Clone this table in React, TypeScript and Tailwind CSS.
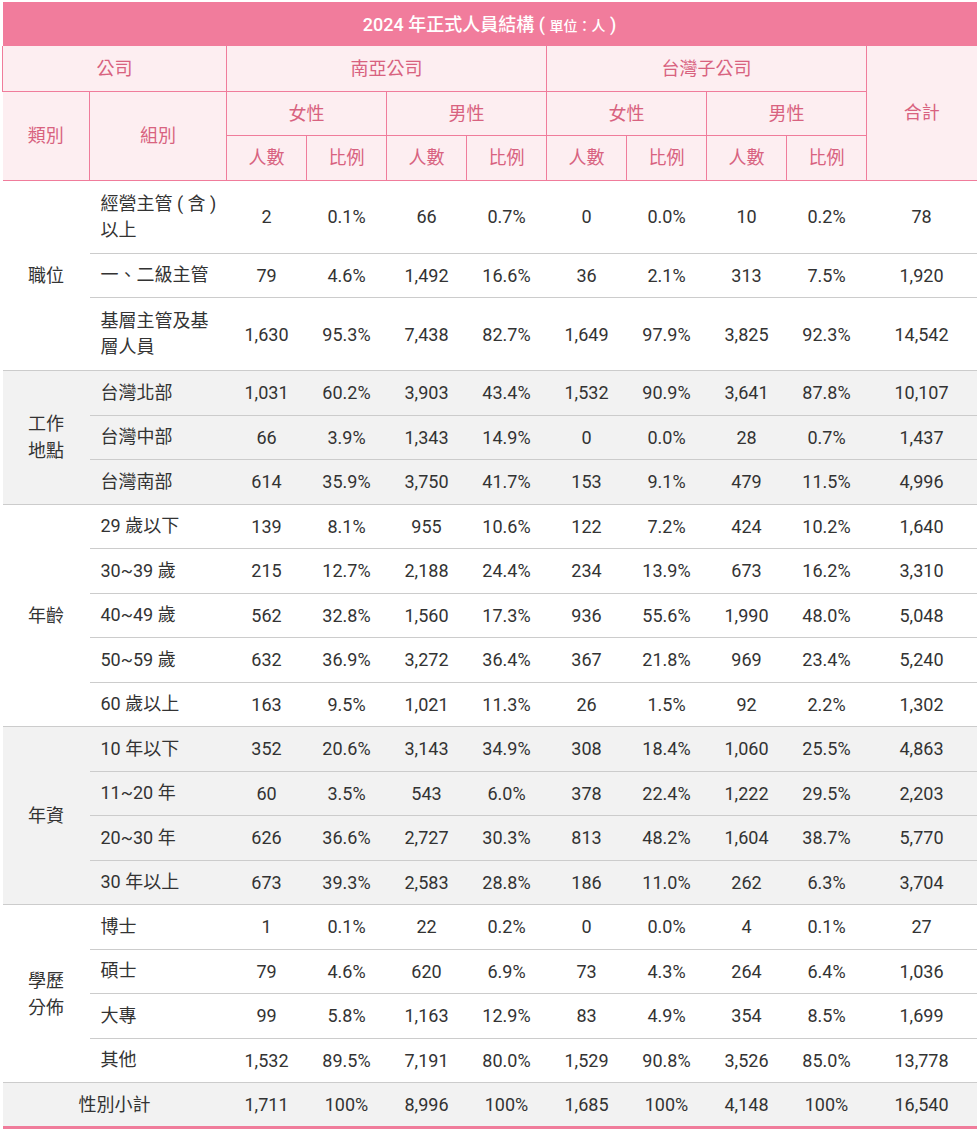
import React from 'react';

type Row = { group: string; values: string[] };
type Section = { category: string[]; shaded: boolean; rows: Row[] };

const sections: Section[] = [
  {
    category: ['職位'],
    shaded: false,
    rows: [
      { group: '經營主管 ( 含 )\n以上', values: ['2', '0.1%', '66', '0.7%', '0', '0.0%', '10', '0.2%', '78'] },
      { group: '一、二級主管', values: ['79', '4.6%', '1,492', '16.6%', '36', '2.1%', '313', '7.5%', '1,920'] },
      { group: '基層主管及基\n層人員', values: ['1,630', '95.3%', '7,438', '82.7%', '1,649', '97.9%', '3,825', '92.3%', '14,542'] },
    ],
  },
  {
    category: ['工作', '地點'],
    shaded: true,
    rows: [
      { group: '台灣北部', values: ['1,031', '60.2%', '3,903', '43.4%', '1,532', '90.9%', '3,641', '87.8%', '10,107'] },
      { group: '台灣中部', values: ['66', '3.9%', '1,343', '14.9%', '0', '0.0%', '28', '0.7%', '1,437'] },
      { group: '台灣南部', values: ['614', '35.9%', '3,750', '41.7%', '153', '9.1%', '479', '11.5%', '4,996'] },
    ],
  },
  {
    category: ['年齡'],
    shaded: false,
    rows: [
      { group: '29 歲以下', values: ['139', '8.1%', '955', '10.6%', '122', '7.2%', '424', '10.2%', '1,640'] },
      { group: '30~39 歲', values: ['215', '12.7%', '2,188', '24.4%', '234', '13.9%', '673', '16.2%', '3,310'] },
      { group: '40~49 歲', values: ['562', '32.8%', '1,560', '17.3%', '936', '55.6%', '1,990', '48.0%', '5,048'] },
      { group: '50~59 歲', values: ['632', '36.9%', '3,272', '36.4%', '367', '21.8%', '969', '23.4%', '5,240'] },
      { group: '60 歲以上', values: ['163', '9.5%', '1,021', '11.3%', '26', '1.5%', '92', '2.2%', '1,302'] },
    ],
  },
  {
    category: ['年資'],
    shaded: true,
    rows: [
      { group: '10 年以下', values: ['352', '20.6%', '3,143', '34.9%', '308', '18.4%', '1,060', '25.5%', '4,863'] },
      { group: '11~20 年', values: ['60', '3.5%', '543', '6.0%', '378', '22.4%', '1,222', '29.5%', '2,203'] },
      { group: '20~30 年', values: ['626', '36.6%', '2,727', '30.3%', '813', '48.2%', '1,604', '38.7%', '5,770'] },
      { group: '30 年以上', values: ['673', '39.3%', '2,583', '28.8%', '186', '11.0%', '262', '6.3%', '3,704'] },
    ],
  },
  {
    category: ['學歷', '分佈'],
    shaded: false,
    rows: [
      { group: '博士', values: ['1', '0.1%', '22', '0.2%', '0', '0.0%', '4', '0.1%', '27'] },
      { group: '碩士', values: ['79', '4.6%', '620', '6.9%', '73', '4.3%', '264', '6.4%', '1,036'] },
      { group: '大專', values: ['99', '5.8%', '1,163', '12.9%', '83', '4.9%', '354', '8.5%', '1,699'] },
      { group: '其他', values: ['1,532', '89.5%', '7,191', '80.0%', '1,529', '90.8%', '3,526', '85.0%', '13,778'] },
    ],
  },
];

const totals = ['1,711', '100%', '8,996', '100%', '1,685', '100%', '4,148', '100%', '16,540'];

const th = 'border border-[#f07c9b] bg-[#fdeef1] text-[#d8627f] font-normal text-center';

export default function App() {
  return (
    <div
      className="p-[2px] bg-white text-[18px] text-[#333333]"
      style={{ fontFamily: 'Roboto, "Noto Sans CJK TC", sans-serif' }}
    >
      <table className="w-[974px] border-collapse table-fixed">
        <colgroup>
          <col className="w-[87px]" />
          <col className="w-[137px]" />
          {Array.from({ length: 8 }).map((_, i) => (
            <col key={i} className="w-[80px]" />
          ))}
          <col className="w-[110px]" />
        </colgroup>
        <thead>
          <tr>
            <th colSpan={11} className="h-[44px] bg-[#f17c9c] text-white font-medium text-center whitespace-nowrap">
              2024 年正式人員結構 ( <span className="text-[14px]">單位：人</span> )
            </th>
          </tr>
          <tr>
            <th colSpan={2} className={`${th} h-[45px] border-t-0`}>公司</th>
            <th colSpan={4} className={`${th} border-t-0`}>南亞公司</th>
            <th colSpan={4} className={`${th} border-t-0`}>台灣子公司</th>
            <th rowSpan={3} className={`${th} border-t-0 border-r-0`}>合計</th>
          </tr>
          <tr>
            <th rowSpan={2} className={`${th} border-l-0`}>類別</th>
            <th rowSpan={2} className={th}>組別</th>
            <th colSpan={2} className={`${th} h-[44px]`}>女性</th>
            <th colSpan={2} className={th}>男性</th>
            <th colSpan={2} className={th}>女性</th>
            <th colSpan={2} className={th}>男性</th>
          </tr>
          <tr>
            {['人數', '比例', '人數', '比例', '人數', '比例', '人數', '比例'].map((t, i) => (
              <th key={i} className={`${th} h-[45px]`}>
                {t}
              </th>
            ))}
          </tr>
        </thead>
        <tbody>
          {sections.map((s) =>
            s.rows.map((r, ri) => {
              const bg = s.shaded ? 'bg-[#f2f2f2]' : 'bg-white';
              const rowBorder = 'border-b border-[#cccccc]';
              const twoLine = r.group.includes('\n');
              return (
                <tr key={s.category.join('') + ri} className={bg}>
                  {ri === 0 && (
                    <td rowSpan={s.rows.length} className={`${rowBorder} text-center leading-[27px]`}>
                      {s.category.map((c) => (
                        <div key={c}>{c}</div>
                      ))}
                    </td>
                  )}
                  <td
                    className={`${rowBorder} pl-[11px] pr-0 leading-[26px] whitespace-nowrap ${twoLine ? 'h-[73px]' : 'h-[44.5px]'}`}
                  >
                    {r.group.split('\n').map((g) => (
                      <div key={g}>{g}</div>
                    ))}
                  </td>
                  {r.values.map((v, vi) => (
                    <td key={vi} className={`${rowBorder} text-center`}>
                      {v}
                    </td>
                  ))}
                </tr>
              );
            })
          )}
          <tr className="bg-[#f2f2f2]">
            <td colSpan={2} className="h-[44.5px] text-center border-b-[3px] border-[#f07c9b]">
              性別小計
            </td>
            {totals.map((v, i) => (
              <td key={i} className="text-center border-b-[3px] border-[#f07c9b]">
                {v}
              </td>
            ))}
          </tr>
        </tbody>
      </table>
    </div>
  );
}
